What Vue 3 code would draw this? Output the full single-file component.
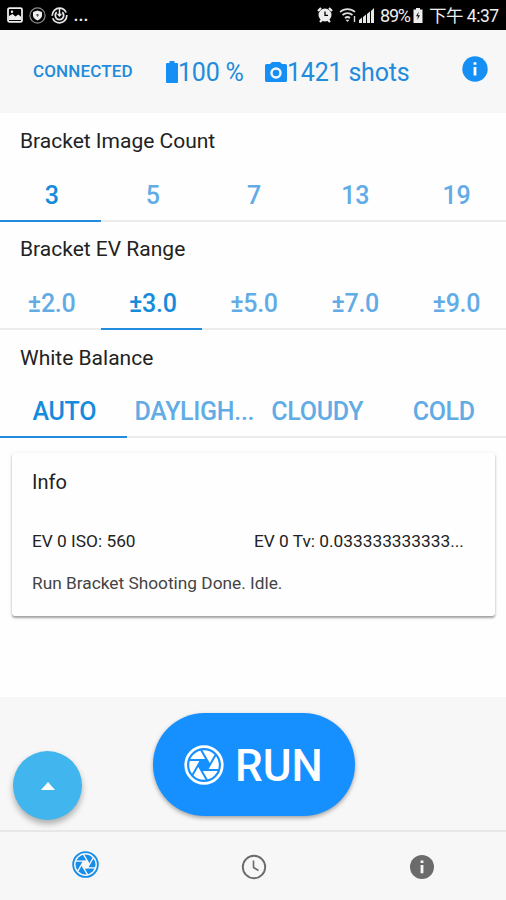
<template>
  <div class="app">
    <div class="status-bar">
      <div class="status-left">
        <svg width="16" height="16" viewBox="0 0 16 16">
          <rect x="1" y="1.2" width="14" height="13.6" rx="1.6" fill="none" stroke="#eee" stroke-width="1.8" />
          <path d="M2 13V9l3.6-2 2.8 2.6 3-2.2 2.6 2.4V13z" fill="#eee" />
          <circle cx="5" cy="4.8" r="1.2" fill="#eee" />
        </svg>
        <svg width="17" height="17" viewBox="0 0 17 17">
          <circle cx="8.5" cy="8.5" r="7.6" fill="none" stroke="#8b8b8b" stroke-width="1.2" />
          <path d="M8.5 3.6 13 5v3.6c0 2-1.8 3.7-4.5 5-2.7-1.3-4.5-3-4.5-5V5z" fill="#eee" />
          <path d="M7.5 7h2v1.6L8.5 10 7.5 8.6z" fill="#555" />
        </svg>
        <svg width="17" height="17" viewBox="0 0 17 17" fill="none" stroke="#e6e6e6">
          <circle cx="8.5" cy="8.5" r="7.3" stroke-width="1.7" stroke-dasharray="20 2.5" />
          <path d="M5.8 5.2a4.2 4.2 0 1 0 5.4 0" stroke-width="1.8" />
          <path d="M8.5 2v6M6.7 7l1.8 2 1.8-2" stroke-width="1.5" />
        </svg>
        <span class="more">...</span>
      </div>
      <div class="status-right">
        <svg width="16" height="16" viewBox="0 0 16 16">
          <path d="M1 4 4 1M15 4l-3-3M3 15l2-2M13 15l-2-2" stroke="#eee" stroke-width="2.2" />
          <circle cx="8" cy="8" r="6.5" fill="#eee" />
          <path d="M8 4.5V8.3h3" fill="none" stroke="#000" stroke-width="1.3" />
        </svg>
        <svg class="wifi" width="17" height="15" viewBox="0 0 17 15" fill="none" stroke="#ddd" stroke-width="1.7">
          <path d="M1 4a11 11 0 0 1 15 0M3.5 7a7.5 7.5 0 0 1 10 0M6 10a4 4 0 0 1 5 0" />
          <path d="m8.5 14-2-2.3h4z" fill="#ddd" stroke="none" />
          <path d="M15.5 14V8" stroke-width="1.4" />
        </svg>
        <svg class="signal" width="16" height="15" viewBox="0 0 16 15" fill="#e8e8e8">
          <path d="M0 15V12l3-2.5V15zM4 15V9l3-2.5V15zM8 15V6l3-2.5V15zM12 15V3l3-3V15z" />
        </svg>
        <span class="percent">89%</span>
        <svg class="charge" width="10" height="15" viewBox="0 0 10 15">
          <path d="M3 0h4v1.5h2.5V15h-9V1.5H3z" fill="#eee" />
          <path d="M5.8 3.5 3 8.3h2L4.2 12 7 7.2H5z" fill="#111" />
        </svg>
        <span class="clock">下午 4:37</span>
      </div>
    </div>

    <header class="header">
      <span class="connected">CONNECTED</span>
      <div class="battery">
        <svg width="12" height="22" viewBox="0 0 12 22" fill="#168ff5">
          <path d="M3.5 0h5v2H11q1 0 1 1v18q0 1-1 1H1q-1 0-1-1V3q0-1 1-1h2.5z" />
        </svg>
        <span>100 %</span>
      </div>
      <div class="shots">
        <svg width="22" height="20" viewBox="0 0 22 20">
          <path d="M7 0h8l2 2h3.5Q22 2 22 3.5v15q0 1.5-1.5 1.5h-19Q0 20 0 18.5v-15Q0 2 1.5 2H5z" fill="#168ff5" />
          <circle cx="11" cy="11" r="4.5" fill="none" stroke="#f7f7f7" stroke-width="2.4" />
        </svg>
        <span>1421 shots</span>
      </div>
      <svg class="info-button" width="26" height="26" viewBox="0 0 26 26">
        <circle cx="13" cy="13" r="12.7" fill="#168ff5" />
        <path d="M11.6 6.2h2.8v2.6h-2.8zM11.6 11h2.8v8.4h-2.8z" fill="#fff" />
      </svg>
    </header>

    <section v-for="group in groups" :key="group.title" class="group">
      <h2>{{ group.title }}</h2>
      <div class="segments">
        <button
          v-for="option in group.options"
          :key="option"
          :class="{ active: option === group.selected, long: option.length > 8 }"
          @click="group.selected = option"
        >
          {{ option }}
        </button>
      </div>
    </section>

    <div class="card">
      <h3>Info</h3>
      <div class="card-row">
        <p>EV 0 ISO: 560</p>
        <p>EV 0 Tv: 0.033333333333...</p>
      </div>
      <p class="message">Run Bracket Shooting Done. Idle.</p>
    </div>

    <footer class="footer">
      <button class="fab">
        <svg width="14" height="8" viewBox="0 0 14 8"><path d="M0 8 7 0l7 8z" fill="#fff" /></svg>
      </button>
      <button class="run">
        <svg class="aperture" width="40" height="40" viewBox="-20 -20 40 40">
          <circle class="ring" r="18.3" />
          <circle class="disc" r="14.8" />
          <path class="hole" :d="hole" />
          <path v-for="n in 6" :key="n" class="gap" :d="gap" :transform="`rotate(${n * 60})`" />
        </svg>
        <span>RUN</span>
      </button>
    </footer>

    <nav class="tabs">
      <a class="tab">
        <svg class="aperture small" width="27" height="27" viewBox="-20 -20 40 40">
          <circle class="ring" r="18.3" />
          <circle class="disc" r="14.8" />
          <path class="hole" :d="hole" />
          <path v-for="n in 6" :key="n" class="gap" :d="gap" :transform="`rotate(${n * 60})`" />
        </svg>
      </a>
      <a class="tab">
        <svg width="26" height="26" viewBox="0 0 26 26" fill="none" stroke="#6b6b6b">
          <circle cx="13" cy="13" r="11.2" stroke-width="1.9" />
          <path d="M12.5 6.5v7l5 3" stroke-width="1.6" />
        </svg>
      </a>
      <a class="tab">
        <svg width="24" height="24" viewBox="0 0 24 24">
          <circle cx="12" cy="12" r="12" fill="#6b6b6b" />
          <path d="M10.6 5.5h2.8v2.6h-2.8zM10.6 10h2.8v8.3h-2.8z" fill="#f7f7f7" />
        </svg>
      </a>
    </nav>
  </div>
</template>

<script setup>
import { ref } from 'vue';

// Lens opening, and the slit between two blades that is repeated around it
const hole = 'M-3.1 -5.4H3.1L6.2 0L3.1 5.4H-3.1L-6.2 0Z';
const gap = 'M3.1 -5H-15';

const groups = ref([
  { title: 'Bracket Image Count', options: ['3', '5', '7', '13', '19'], selected: '3' },
  { title: 'Bracket EV Range', options: ['±2.0', '±3.0', '±5.0', '±7.0', '±9.0'], selected: '±3.0' },
  { title: 'White Balance', options: ['AUTO', 'DAYLIGH...', 'CLOUDY', 'COLD'], selected: 'AUTO' },
]);
</script>

<style>
body {
  margin: 0;
  background: #fefefe;
}
</style>

<style scoped>
.app {
  height: 900px;
  display: flex;
  flex-direction: column;
  overflow: hidden;
  background: #fefefe;
  font-family: Roboto, "Noto Sans CJK TC", sans-serif;
  color: #222;
}

button {
  border: 0;
  padding: 0;
  background: none;
  font-family: inherit;
}

h2, h3, p {
  margin: 0;
  font-weight: 400;
}

svg {
  display: block;
  flex: none;
}

.status-bar {
  height: 30px;
  flex: none;
  display: flex;
  justify-content: space-between;
  padding: 0 8px 0 7px;
  background: #000;
  color: #eee;
}

.status-left, .status-right {
  display: flex;
  align-items: center;
}

.status-left {
  gap: 5.5px;
}

.more {
  font-size: 18px;
  line-height: 26px;
  font-weight: 500;
}

.wifi {
  margin-left: 6px;
}

.signal {
  margin-left: 3px;
}

.percent {
  margin-left: 5px;
  width: 29px;
  font-size: 18px;
  letter-spacing: -1.2px;
  padding-top: 1px;
}

.charge {
  margin-left: 4px;
}

.clock {
  margin-left: 6px;
  width: 69px;
  font-size: 17.5px;
  letter-spacing: -0.5px;
  white-space: nowrap;
  line-height: 30px;
  padding-top: 2px;
}

.header {
  height: 83px;
  flex: none;
  box-sizing: border-box;
  display: flex;
  align-items: center;
  padding: 0 18px 0 33px;
  background: #f7f7f7;
  color: #218bdc;
  font-size: 25px;
  letter-spacing: -0.2px;
}

.connected {
  width: 133px;
  margin-bottom: 2px;
  font-size: 17px;
  font-weight: 500;
  letter-spacing: 0.15px;
}

.battery, .shots {
  display: flex;
  align-items: center;
}

.battery span, .shots span {
  padding-top: 1px;
}

.battery {
  width: 99px;
  white-space: nowrap;
}

.info-button {
  margin-left: auto;
  margin-bottom: 5px;
}

.group {
  height: 108.3px;
  flex: none;
}

.group h2 {
  height: 57px;
  line-height: 57px;
  padding-left: 20px;
  font-size: 21px;
}

.segments {
  display: grid;
  grid-auto-flow: column;
  grid-auto-columns: minmax(0, 1fr);
  height: 51.5px;
}

.segments button {
  box-sizing: border-box;
  padding-left: 2px;
  padding-top: 1px;
  border-bottom: 2px solid #ececec;
  color: #62ace6;
  font-size: 25px;
  letter-spacing: -0.3px;
  font-weight: 500;
  white-space: nowrap;
}

.segments button.active {
  border-bottom-color: #218bdc;
  color: #168bdc;
}

.segments button.long {
  padding-left: 8px;
  text-align: left;
}

.card {
  height: 163px;
  flex: none;
  box-sizing: border-box;
  margin: 15px 11px 0 12px;
  padding: 17px 20px 0;
  border-radius: 3px;
  background: #fefefe;
  box-shadow: 0 2px 2px rgba(0, 0, 0, 0.3), 0 1px 4px rgba(0, 0, 0, 0.12);
}

.card h3 {
  font-size: 20px;
  line-height: 24px;
}

.card-row {
  display: flex;
  margin-top: 36px;
}

.card p {
  font-size: 17.3px;
  line-height: 22px;
  white-space: nowrap;
}

.card-row p:first-child {
  width: 222px;
  flex: none;
}

.card .message {
  margin-top: 20px;
  color: #444;
}

.footer {
  height: 133px;
  flex: none;
  box-sizing: border-box;
  margin-top: auto;
  padding: 16px 0 0 13px;
  display: flex;
  background: #f7f7f7;
}

.fab {
  width: 69px;
  height: 69px;
  flex: none;
  margin-top: 38px;
  display: flex;
  align-items: center;
  justify-content: center;
  border-radius: 50%;
  background: #41b5ed;
  box-shadow: 0 4px 6px rgba(0, 0, 0, 0.3);
}

.run {
  width: 202px;
  height: 103px;
  margin-left: 71px;
  display: flex;
  align-items: center;
  padding-left: 31px;
  box-sizing: border-box;
  border-radius: 52px;
  background: #168fff;
  color: #fff;
  box-shadow: 0 2px 4px rgba(0, 0, 0, 0.35);
}

.run span {
  margin-left: 11px;
  padding-top: 2px;
  font-size: 44px;
  font-weight: 500;
}

.aperture .ring {
  fill: none;
  stroke: #fff;
  stroke-width: 2.7;
}

.aperture .disc {
  fill: #fff;
}

.aperture .hole {
  fill: #168fff;
}

.aperture .gap {
  stroke: #168fff;
  stroke-width: 2;
}

.aperture.small {
  margin-right: 2px;
  margin-bottom: 5px;
}

.small .ring {
  stroke: #168de8;
}

.small .disc {
  fill: #168de8;
}

.small .hole {
  fill: #f7f7f7;
}

.small .gap {
  stroke: #f7f7f7;
}

.tabs {
  height: 70px;
  flex: none;
  box-sizing: border-box;
  display: flex;
  padding-left: 2px;
  border-top: 2px solid #e6e8e8;
  background: #f7f7f7;
}

.tab {
  flex: 1;
  display: flex;
  align-items: center;
  justify-content: center;
  padding-top: 2px;
}
</style>
